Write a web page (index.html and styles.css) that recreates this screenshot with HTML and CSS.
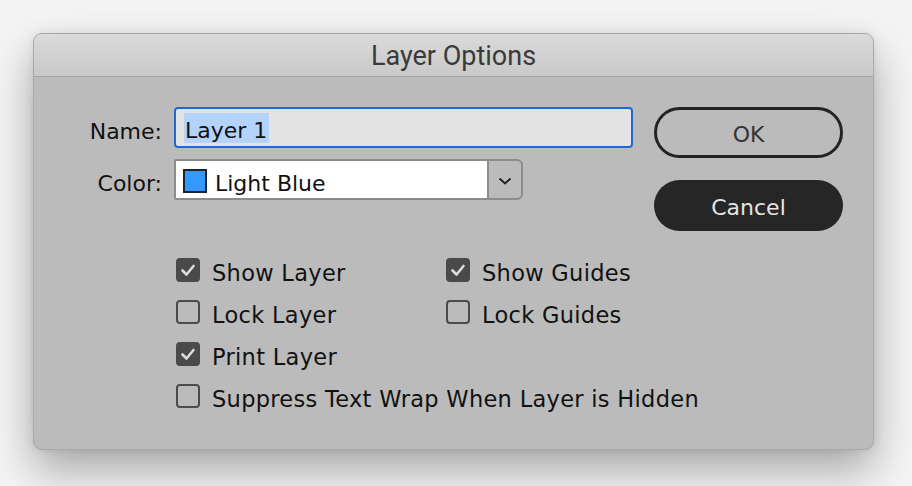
FILE: index.html
```html
<!DOCTYPE html>
<html>
<head>
<meta charset="utf-8">
<link rel="stylesheet" href="styles.css">
</head>
<body>
<div class="dialog">
  <div class="titlebar">Layer Options</div>
  <div class="content">
    <div class="form">
      <div class="label">Name:</div>
      <div class="input"><span class="sel">Layer 1</span></div>
      <div class="label">Color:</div>
      <div class="select">
        <div class="field"><span class="swatch"></span><span class="txt">Light Blue</span></div>
        <div class="arrow"><svg width="14" height="8" viewBox="0 0 14 8"><polyline points="1.5,1.5 7,6.5 12.5,1.5" fill="none" stroke="#222" stroke-width="2"/></svg></div>
      </div>
      <div class="checks">
        <div class="check"><span class="box on"><svg viewBox="0 0 24 24" width="24" height="24"><polyline points="6.5,12.5 10.5,16.5 17.5,8" fill="none" stroke="#dcdcdc" stroke-width="2.6" stroke-linecap="round" stroke-linejoin="round"/></svg></span><span class="ctext">Show Layer</span></div>
        <div class="check"><span class="box on"><svg viewBox="0 0 24 24" width="24" height="24"><polyline points="6.5,12.5 10.5,16.5 17.5,8" fill="none" stroke="#dcdcdc" stroke-width="2.6" stroke-linecap="round" stroke-linejoin="round"/></svg></span><span class="ctext">Show Guides</span></div>
        <div class="check"><span class="box"></span><span class="ctext">Lock Layer</span></div>
        <div class="check"><span class="box"></span><span class="ctext">Lock Guides</span></div>
        <div class="check wide"><span class="box on"><svg viewBox="0 0 24 24" width="24" height="24"><polyline points="6.5,12.5 10.5,16.5 17.5,8" fill="none" stroke="#dcdcdc" stroke-width="2.6" stroke-linecap="round" stroke-linejoin="round"/></svg></span><span class="ctext">Print Layer</span></div>
        <div class="check wide"><span class="box"></span><span class="ctext">Suppress Text Wrap When Layer is Hidden</span></div>
      </div>
    </div>
    <div class="buttons">
      <div class="btn ok">OK</div>
      <div class="btn cancel">Cancel</div>
    </div>
  </div>
</div>
</body>
</html>
```
FILE: styles.css
```css
html, body {
  margin: 0;
  padding: 0;
}
body {
  width: 912px;
  height: 486px;
  background: #f4f4f4;
  padding: 33px 0 0 33px;
  box-sizing: border-box;
  font-family: "DejaVu Sans", "Verdana", sans-serif;
  overflow: hidden;
}
.dialog {
  width: 841px;
  height: 417px;
  box-sizing: border-box;
  border-radius: 9px;
  background: #bbbbbb;
  border: 1px solid #a9a9a9;
  box-shadow: 0 20px 44px rgba(0, 0, 0, 0.32), 0 0 8px rgba(0, 0, 0, 0.08);
  overflow: hidden;
}
.titlebar {
  height: 43px;
  background: linear-gradient(#dadada, #c9c9c9);
  border-bottom: 1px solid #a2a2a2;
  display: flex;
  align-items: center;
  justify-content: center;
  font-family: Roboto, "Liberation Sans", sans-serif;
  font-size: 27px;
  color: #3a3a3a;
  padding-top: 2px;
  box-sizing: border-box;
}
.content {
  display: flex;
  padding-top: 30px;
}
.form {
  display: grid;
  grid-template-columns: 128px 459px;
  grid-template-rows: 41px 41px auto;
  column-gap: 12px;
  row-gap: 11px;
}
.label {
  font-size: 22px;
  color: #111;
  display: flex;
  align-items: center;
  justify-content: flex-end;
  padding-top: 7px;
  box-sizing: border-box;
}
.input {
  border: 2px solid #1f6ad0;
  border-radius: 4px;
  background: #e3e3e3;
  display: flex;
  align-items: center;
  padding-left: 8px;
  box-sizing: border-box;
}
.sel {
  background: #b3d3fb;
  font-size: 22px;
  color: #111;
  height: 30px;
  line-height: 36px;
  padding: 0 2px 0 1px;
}
.select {
  width: 349px;
  display: flex;
  border: 2px solid #8c8c8c;
  border-radius: 2px 6px 6px 2px;
  box-sizing: border-box;
}
.field {
  width: 311px;
  background: #ffffff;
  display: flex;
  align-items: center;
  padding-left: 7px;
  box-sizing: border-box;
}
.swatch {
  width: 24px;
  height: 24px;
  box-sizing: border-box;
  border: 2px solid #222;
  background: #3399ff;
  margin-right: 8px;
  margin-top: 2px;
}
.txt {
  font-size: 22px;
  color: #111;
  padding-top: 7px;
}
.arrow {
  flex: 1;
  border-left: 2px solid #8c8c8c;
  display: flex;
  align-items: center;
  justify-content: center;
  padding-top: 2px;
}
.checks {
  grid-column: 2;
  margin-top: 47px;
  margin-left: 2px;
  display: grid;
  grid-template-columns: 270px auto;
  row-gap: 18px;
}
.check {
  display: flex;
  align-items: center;
  height: 24px;
}
.check.wide {
  grid-column: 1 / 3;
}
.box {
  width: 24px;
  height: 24px;
  box-sizing: border-box;
  border: 2px solid #4a4a4a;
  border-radius: 4px;
  margin-right: 12px;
  flex: none;
  display: flex;
}
.box.on {
  background: #4a4a4a;
  border: none;
}
.ctext {
  font-size: 22.5px;
  letter-spacing: 0.3px;
  color: #111;
  padding-top: 6px;
  white-space: nowrap;
}
.buttons {
  margin-left: 21px;
  display: flex;
  flex-direction: column;
  gap: 21px;
}
.btn {
  width: 189px;
  height: 51px;
  box-sizing: border-box;
  border-radius: 26px;
  display: flex;
  align-items: center;
  justify-content: center;
  font-size: 22px;
  padding-top: 3px;
}
.ok {
  border: 3px solid #232323;
  color: #333;
}
.cancel {
  background: #262626;
  color: #e4e4e4;
  margin-top: 1px;
}
```
